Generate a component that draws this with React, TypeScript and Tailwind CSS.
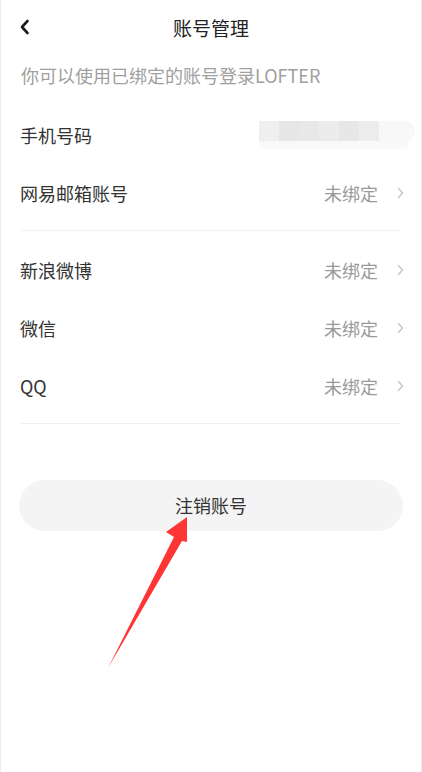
import React from "react";

const font = { fontFamily: '"Noto Sans CJK SC", "Noto Sans", sans-serif' };

const Chevron = () => (
  <svg width="7" height="12" viewBox="0 0 7 12" className="ml-[19px] -mr-[3px]">
    <path d="M1.5 1.5 L5.5 6 L1.5 10.5" fill="none" stroke="#c4c4c4" strokeWidth="1.4" strokeLinecap="round" strokeLinejoin="round" />
  </svg>
);

const Row = ({ label, value }: { label: string; value?: React.ReactNode }) => (
  <div className="h-[58px] flex items-center justify-between">
    <span className="text-[18px] text-[#333] -ml-[1px]">{label}</span>
    {value ?? (
      <div className="flex items-center">
        <span className="text-[18px] text-[#9a9a9a]">未绑定</span>
        <Chevron />
      </div>
    )}
  </div>
);

const BlurredPhone = () => {
  const shades = ["bg-[#efefef]", "bg-[#e6e6e6]", "bg-[#e8e8e8]", "bg-[#ececec]", "bg-[#e7e7e7]", "bg-[#ededed]"];
  return (
    <div className="-mr-[14px] flex flex-col">
      <div className="flex h-[20px]">
        {shades.map((s, i) => (
          <div key={i} className={`w-[20px] h-full ${s}`} />
        ))}
        <div className="w-[36px] h-full bg-[#f8f8f8] rounded-r-full" />
      </div>
      <div className="h-[8px] w-[150px] bg-[#f9f9f9] rounded-b-md" />
    </div>
  );
};

export default function App() {
  return (
    <div className="relative w-[422px] h-[772px] bg-white border-x border-[#ececec] overflow-hidden" style={font}>
      {/* header */}
      <div className="relative h-[56px] flex items-center justify-center">
        <svg width="12" height="16" viewBox="0 0 12 16" className="absolute left-[18px] top-[19px]">
          <path d="M8.5 2 L3 8 L8.5 14" fill="none" stroke="#1a1a1a" strokeWidth="2.6" strokeLinecap="round" strokeLinejoin="round" />
        </svg>
        <span className="text-[19px] text-[#222]">账号管理</span>
      </div>

      <div className="px-[20px]">
        <p className="mt-[6px] text-[18px] leading-[26px] text-[#a0a0a0]">你可以使用已绑定的账号登录LOFTER</p>

        <div className="mt-[18px]">
          <Row label="手机号码" value={<BlurredPhone />} />
          <Row label="网易邮箱账号" />
        </div>
        <div className="mt-[8px] border-t border-[#f0f0f0]" />
        <div className="mt-[10px]">
          <Row label="新浪微博" />
          <Row label="微信" />
          <Row label="QQ" />
        </div>
        <div className="mt-[8px] border-t border-[#f0f0f0]" />
      </div>

      <div className="mx-[18px] mt-[56px] h-[51px] rounded-full bg-[#f4f4f4] flex items-center justify-center">
        <span className="text-[18px] text-[#333]">注销账号</span>
      </div>

      {/* red annotation arrow */}
      <svg className="absolute left-0 top-0 pointer-events-none" width="422" height="772" viewBox="0 0 422 772">
        <polygon points="186,517 165,532 173,537 107,668 181,541 186,542" fill="#fe3535" />
      </svg>
    </div>
  );
}
